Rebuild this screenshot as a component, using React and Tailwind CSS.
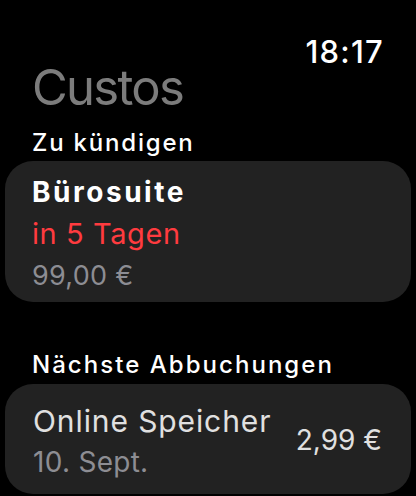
export default function App() {
  return (
    <div className="w-[416px] h-[496px] bg-black overflow-hidden" style={{ fontFamily: 'Inter, "Noto Sans", sans-serif' }}>
      <div className="flex justify-end pr-[32px] pt-[41px]">
        <span className="text-white font-medium text-[31px] leading-[21px] tracking-[0.04em]">18:17</span>
      </div>
      <div className="px-[32px] -mt-[2px]">
        <div className="text-[#7c7c7c] text-[49px] leading-[56px] tracking-[-0.035em]">Custos</div>
        <div className="text-white font-medium text-[24px] leading-[28px] tracking-[0.075em] mt-[13px]">Zu kündigen</div>
      </div>
      <div className="mx-[5px] mt-[4px] rounded-[28px] bg-[#222222] px-[27px] pt-[14px] pb-[9px] flex flex-col">
        <div className="text-white font-bold text-[28px] leading-[34px] tracking-[0.09em]">Bürosuite</div>
        <div className="text-[#ff3b3f] text-[29px] leading-[34px] mt-[8px] tracking-[0.02em]">in 5 Tagen</div>
        <div className="text-[#8d8d93] text-[27px] leading-[34px] mt-[8px] tracking-[0.01em]">99,00 €</div>
      </div>
      <div className="px-[32px] mt-[49px]">
        <div className="text-white font-medium text-[24px] leading-[28px] tracking-[0.085em]">Nächste Abbuchungen</div>
      </div>
      <div className="mx-[5px] mt-[5px] rounded-[28px] bg-[#222222] pl-[28px] pr-[29px] pt-[20px] pb-[15px] flex items-start justify-between">
        <div className="flex flex-col">
          <div className="text-[#e0e0e0] text-[30px] leading-[34px] tracking-[0.03em]">Online Speicher</div>
          <div className="text-[#8d8d93] text-[28px] leading-[34px] mt-[7px] tracking-[0.01em]">10. Sept.</div>
        </div>
        <div className="text-[#e0e0e0] text-[28px] leading-[34px] mt-[19px] tracking-[0em]">2,99 €</div>
      </div>
    </div>
  );
}
